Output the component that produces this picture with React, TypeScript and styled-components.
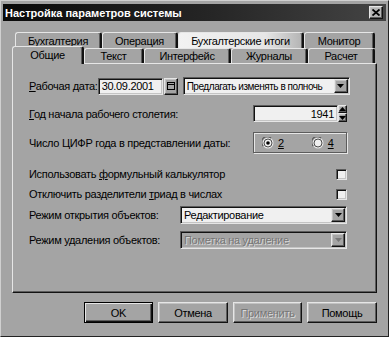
import React from 'react'
import styled, { createGlobalStyle, css } from 'styled-components'

const FACE = '#a4a4a4'
const LIGHT = '#e6e6e6'
const SHADOW = '#5c5c5c'
const DARK = '#121212'

const GlobalStyle = createGlobalStyle`
  html, body { margin: 0; padding: 0; background: ${FACE}; }
  body {
    font-family: "Liberation Sans", Arial, sans-serif;
    font-size: 11px;
    letter-spacing: -0.3px;
    color: #000;
  }
`

const raised = css`
  background: ${FACE};
  border-top: 1px solid ${LIGHT};
  border-left: 1px solid ${LIGHT};
  border-right: 1px solid ${DARK};
  border-bottom: 1px solid ${DARK};
  box-shadow: inset -1px -1px 0 ${SHADOW}, inset 1px 1px 0 #c2c2c2;
`

const sunken = css`
  background: #f0f0f0;
  border-top: 1px solid ${SHADOW};
  border-left: 1px solid ${SHADOW};
  border-right: 1px solid ${LIGHT};
  border-bottom: 1px solid ${LIGHT};
  box-shadow: inset 1px 1px 0 ${DARK}, inset -1px -1px 0 #c4c4c4;
`

const Window = styled.div`
  width: 389px;
  height: 337px;
  box-sizing: border-box;
  background: ${FACE};
  border-top: 1px solid #d0d0d0;
  border-left: 1px solid #d0d0d0;
  border-right: 1px solid #222;
  border-bottom: 1px solid #222;
  padding: 3px 2px 0 2px;
  display: flex;
  flex-direction: column;
`

const TitleBar = styled.div`
  height: 17px;
  display: flex;
  align-items: center;
  justify-content: space-between;
  padding: 0 3px 0 2px;
  background: linear-gradient(to right, #0a0a0a 0%, #262626 55%, #444 100%);
`

const Title = styled.span`
  color: #fff;
  font-weight: bold;
  font-size: 11px;
  letter-spacing: 0;
`

const CloseBtn = styled.div`
  ${raised};
  box-sizing: border-box;
  width: 14px;
  height: 13px;
  display: flex;
  align-items: center;
  justify-content: center;
  background: #b4b4b4;
`

const TabArea = styled.div`
  margin: 11px 9px 0 9px;
  display: flex;
  flex-direction: column;
`

const TabRow = styled.div<{ $indent?: number; $front?: boolean }>`
  display: flex;
  height: ${p => (p.$front ? 15 : 16)}px;
  padding-left: ${p => p.$indent || 0}px;
  position: relative;
  z-index: ${p => (p.$front ? 2 : 1)};
`

const Tab = styled.div<{ $w: number; $active?: boolean; $glare?: boolean }>`
  box-sizing: border-box;
  width: ${p => p.$w}px;
  height: ${p => (p.$active ? 'calc(100% + 3px)' : '100%')};
  margin-top: ${p => (p.$active ? -2 : 0)}px;
  display: flex;
  align-items: center;
  justify-content: center;
  background: ${p =>
    p.$glare ? 'linear-gradient(to right, #f2f2f2 0%, #e6e6e6 70%, #b4b4b4 100%)' : FACE};
  border-top: 1px solid ${LIGHT};
  border-left: 1px solid ${LIGHT};
  border-right: 2px solid ${DARK};
  border-radius: 3px 3px 0 0;
  box-shadow: inset -1px 0 0 ${SHADOW};
  padding-bottom: ${p => (p.$active ? 2 : 0)}px;
`

const Panel = styled.div`
  box-sizing: border-box;
  height: 230px;
  border-top: 1px solid ${LIGHT};
  border-left: 1px solid ${LIGHT};
  border-right: 1px solid ${DARK};
  border-bottom: 1px solid ${DARK};
  box-shadow: inset -1px -1px 0 ${SHADOW};
  padding: 13px 29px 0 16px;
  display: flex;
  flex-direction: column;
`

const Row = styled.div<{ $mt?: number; $h?: number }>`
  display: flex;
  align-items: center;
  justify-content: space-between;
  height: ${p => p.$h || 18}px;
  margin-top: ${p => p.$mt || 0}px;
`

const Label = styled.span`
  white-space: nowrap;
`

const U = styled.span`
  text-decoration: underline;
`

const Group = styled.div`
  display: flex;
  align-items: center;
`

const Field = styled.div<{ $w: number; $right?: boolean }>`
  ${sunken};
  box-sizing: border-box;
  width: ${p => p.$w}px;
  height: 17px;
  display: flex;
  align-items: center;
  justify-content: ${p => (p.$right ? 'flex-end' : 'flex-start')};
  padding: 0 3px;
  white-space: nowrap;
  overflow: hidden;
`

const SmallBtn = styled.div<{ $w: number; $h: number }>`
  ${raised};
  box-sizing: border-box;
  width: ${p => p.$w}px;
  height: ${p => p.$h}px;
  display: flex;
  align-items: center;
  justify-content: center;
  flex-shrink: 0;
`

const Combo = styled.div<{ $w: number; $ml?: number; $disabled?: boolean }>`
  ${sunken};
  ${p => p.$disabled && `background: ${FACE};`}
  box-sizing: border-box;
  width: ${p => p.$w}px;
  height: 18px;
  margin-left: ${p => p.$ml || 0}px;
  display: flex;
  align-items: center;
  justify-content: space-between;
  padding: 1px 1px 1px 3px;
`

const ComboText = styled.span<{ $disabled?: boolean; $tight?: boolean }>`
  white-space: nowrap;
  overflow: visible;
  flex: 1;
  min-width: 0;
  font-size: ${p => (p.$tight ? '10px' : '11px')};
  letter-spacing: ${p => (p.$tight ? '-0.45px' : '-0.3px')};
  color: ${p => (p.$disabled ? '#767676' : '#000')};
  text-shadow: ${p => (p.$disabled ? '1px 1px 0 #d8d8d8' : 'none')};
`

const SpinBox = styled.div`
  display: flex;
  width: 94px;
  height: 17px;
`

const SpinCol = styled.div`
  display: flex;
  flex-direction: column;
`

const RadioBox = styled.div`
  box-sizing: border-box;
  width: 94px;
  height: 21px;
  border: 1px solid ${SHADOW};
  box-shadow: inset 1px 1px 0 ${LIGHT}, 1px 1px 0 ${LIGHT};
  display: flex;
  align-items: center;
  padding-left: 8px;
  gap: 28px;
`

const RadioItem = styled.div`
  display: flex;
  align-items: center;
  gap: 4px;
`

const Check = styled.div`
  ${sunken};
  box-sizing: border-box;
  width: 11px;
  height: 11px;
`

const Footer = styled.div`
  display: flex;
  justify-content: flex-end;
  gap: 5px;
  margin-top: 9px;
  padding-right: 9px;
`

const Button = styled.div<{ $w: number; $default?: boolean; $disabled?: boolean }>`
  ${raised};
  box-sizing: border-box;
  width: ${p => p.$w}px;
  height: 21px;
  display: flex;
  align-items: center;
  justify-content: center;
  color: ${p => (p.$disabled ? '#767676' : '#000')};
  text-shadow: ${p => (p.$disabled ? '1px 1px 0 #dadada' : 'none')};
  ${p =>
    p.$default &&
    `
    border: 1px solid #000;
    box-shadow: inset 1px 1px 0 ${LIGHT}, inset -1px -1px 0 ${DARK}, inset -2px -2px 0 ${SHADOW};
  `}
`

const Arrow = ({ up, color = '#000' }: { up?: boolean; color?: string }) => (
  <svg width="7" height="4" viewBox="0 0 7 4">
    <polygon points={up ? '3.5,0 7,4 0,4' : '0,0 7,0 3.5,4'} fill={color} />
  </svg>
)

const Radio = ({ checked }: { checked?: boolean }) => (
  <svg width="12" height="12" viewBox="0 0 12 12">
    <circle cx="6" cy="6" r="5.5" fill={LIGHT} />
    <path d="M1.2 9 A5.5 5.5 0 0 1 9 1.2" stroke={SHADOW} strokeWidth="1.2" fill="none" />
    <circle cx="6" cy="6" r="4" fill="#f0f0f0" stroke="#222" strokeWidth="0.8" />
    {checked && <circle cx="6" cy="6" r="1.8" fill="#000" />}
  </svg>
)

const topTabs = [
  { name: 'Бухгалтерия', w: 87 },
  { name: 'Операция', w: 76 },
  { name: 'Бухгалтерские итоги', w: 126, glare: true },
  { name: 'Монитор', w: 71 },
]

const frontTabs = [
  { name: 'Общие', w: 72, active: true },
  { name: 'Текст', w: 60 },
  { name: 'Интерфейс', w: 87 },
  { name: 'Журналы', w: 77 },
  { name: 'Расчет', w: 67 },
]

export default function App() {
  return (
    <>
      <GlobalStyle />
      <Window>
        <TitleBar>
          <Title>Настройка параметров системы</Title>
          <CloseBtn>
            <svg width="8" height="7" viewBox="0 0 8 7">
              <path d="M0.5 0.5 L7.5 6.5 M7.5 0.5 L0.5 6.5" stroke="#000" strokeWidth="1.8" />
            </svg>
          </CloseBtn>
        </TitleBar>

        <TabArea>
          <TabRow $indent={3}>
            {topTabs.map(t => (
              <Tab key={t.name} $w={t.w} $glare={t.glare}>
                {t.name}
              </Tab>
            ))}
          </TabRow>
          <TabRow $front>
            {frontTabs.map(t => (
              <Tab key={t.name} $w={t.w} $active={t.active}>
                {t.name}
              </Tab>
            ))}
          </TabRow>

          <Panel>
            <Row>
              <Label>
                <U>Р</U>абочая дата:
              </Label>
              <Group>
                <Field $w={65}>30.09.2001</Field>
                <SmallBtn $w={14} $h={17} style={{ marginLeft: 1 }}>
                  <svg width="8" height="8" viewBox="0 0 8 8">
                    <rect x="0.5" y="0.5" width="7" height="7" fill="none" stroke="#000" />
                    <line x1="0" y1="2.5" x2="8" y2="2.5" stroke="#000" />
                  </svg>
                </SmallBtn>
                <Combo $w={167} $ml={5}>
                  <ComboText $tight>Предлагать изменять в полночь</ComboText>
                  <SmallBtn $w={14} $h={14}>
                    <Arrow />
                  </SmallBtn>
                </Combo>
              </Group>
            </Row>

            <Row $mt={10} $h={17}>
              <Label>
                <U>Г</U>од начала рабочего столетия:
              </Label>
              <SpinBox>
                <Field $w={85} $right>
                  1941
                </Field>
                <SpinCol>
                  <SmallBtn $w={9} $h={8}>
                    <Arrow up />
                  </SmallBtn>
                  <SmallBtn $w={9} $h={9}>
                    <Arrow />
                  </SmallBtn>
                </SpinCol>
              </SpinBox>
            </Row>

            <Row $mt={10} $h={21}>
              <Label>Число ЦИФР года в представлении даты:</Label>
              <RadioBox>
                <RadioItem>
                  <Radio checked />
                  <U>2</U>
                </RadioItem>
                <RadioItem>
                  <Radio />
                  <U>4</U>
                </RadioItem>
              </RadioBox>
            </Row>

            <Row $mt={12} $h={18}>
              <Label>
                Использовать <U>ф</U>ормульный калькулятор
              </Label>
              <Check />
            </Row>

            <Row $mt={2} $h={18}>
              <Label>
                Отключить разделители <U>т</U>риад в числах
              </Label>
              <Check />
            </Row>

            <Row $mt={3}>
              <Label>Режим открытия объектов:</Label>
              <Combo $w={167}>
                <ComboText>Редактирование</ComboText>
                <SmallBtn $w={14} $h={14}>
                  <Arrow />
                </SmallBtn>
              </Combo>
            </Row>

            <Row $mt={7}>
              <Label>Режим удаления объектов:</Label>
              <Combo $w={167} $disabled>
                <ComboText $disabled>Пометка на удаление</ComboText>
                <SmallBtn $w={14} $h={14}>
                  <Arrow color="#777" />
                </SmallBtn>
              </Combo>
            </Row>
          </Panel>
        </TabArea>

        <Footer>
          <Button $w={69} $default>
            OK
          </Button>
          <Button $w={70}>Отмена</Button>
          <Button $w={69} $disabled>
            Применить
          </Button>
          <Button $w={70}>Помощь</Button>
        </Footer>
      </Window>
    </>
  )
}
